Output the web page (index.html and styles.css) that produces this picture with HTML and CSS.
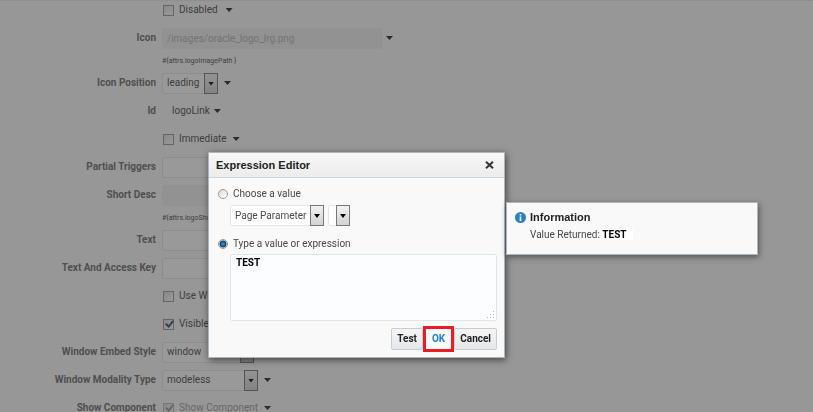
FILE: index.html
```html
<!DOCTYPE html>
<html lang="en">
<head>
    <meta charset="UTF-8">
    <title>Expression Editor</title>
    <link rel="stylesheet" href="styles.css">
</head>
<body>

<!-- component properties -->
<form class="props" action="#">
    <div class="row">
        <span class="name"></span>
        <input type="checkbox" class="check" id="disabled">
        <label for="disabled">Disabled</label>
        <button type="button" class="more after-text" aria-label="Disabled options"></button>
    </div>
    <div class="row">
        <label class="name" for="icon">Icon</label>
        <input type="text" class="field" id="icon" value="/images/oracle_logo_lrg.png" disabled>
        <button type="button" class="more after-field" aria-label="Icon options"></button>
    </div>
    <p class="hint">#{attrs.logoImagePath }</p>
    <div class="row">
        <label class="name" for="position">Icon Position</label>
        <span class="pick pick-s"><select id="position"><option>leading</option></select></span>
        <button type="button" class="more" aria-label="Icon position options"></button>
    </div>
    <div class="row">
        <span class="name">Id</span>
        <span class="value">logoLink</span>
        <button type="button" class="more after-field" aria-label="Id options"></button>
    </div>
    <div class="row">
        <span class="name"></span>
        <input type="checkbox" class="check" id="immediate">
        <label for="immediate">Immediate</label>
        <button type="button" class="more" aria-label="Immediate options"></button>
    </div>
    <div class="row">
        <label class="name" for="triggers">Partial Triggers</label>
        <input type="text" class="field" id="triggers">
    </div>
    <div class="row">
        <label class="name" for="desc">Short Desc</label>
        <input type="text" class="field" id="desc" disabled>
    </div>
    <p class="hint">#{attrs.logoShortDesc }</p>
    <div class="row">
        <label class="name" for="text">Text</label>
        <input type="text" class="field" id="text">
    </div>
    <div class="row">
        <label class="name" for="access">Text And Access Key</label>
        <input type="text" class="field" id="access">
    </div>
    <div class="row">
        <span class="name"></span>
        <input type="checkbox" class="check" id="usewindow">
        <label for="usewindow">Use Window</label>
    </div>
    <div class="row">
        <span class="name"></span>
        <input type="checkbox" class="check" id="visible" checked>
        <label for="visible">Visible</label>
    </div>
    <div class="row">
        <label class="name" for="embed">Window Embed Style</label>
        <span class="pick pick-m"><select id="embed"><option>window</option></select></span>
    </div>
    <div class="row">
        <label class="name" for="modality">Window Modality Type</label>
        <span class="pick pick-l"><select id="modality"><option>modeless</option></select></span>
        <button type="button" class="more" aria-label="Window modality options"></button>
    </div>
    <div class="row">
        <label class="name" for="show">Show Component</label>
        <input type="checkbox" class="check" id="show" checked disabled>
        <label class="off" for="show">Show Component</label>
        <button type="button" class="more" aria-label="Show component options"></button>
    </div>
</form>

<div class="shade"></div>

<!-- expression editor -->
<div class="dialog" role="dialog" aria-labelledby="dialog-title">
    <div class="dialog-head">
        <h1 id="dialog-title">Expression Editor</h1>
        <button type="button" class="close" aria-label="Close">
            <svg width="9" height="8" viewBox="0 0 9 8"><path d="M1 .8L8 7.2M8 .8L1 7.2" stroke="#333" stroke-width="2"/></svg>
        </button>
    </div>
    <form class="dialog-body" action="#">
        <div class="option">
            <input type="radio" class="radio" name="mode" id="choose">
            <label for="choose">Choose a value</label>
        </div>
        <div class="choices">
            <span class="pick pick-param"><select aria-label="Value type"><option>Page Parameter</option></select></span>
            <span class="pick pick-empty"><select aria-label="Value"><option></option></select></span>
        </div>
        <div class="option">
            <input type="radio" class="radio" name="mode" id="type" checked>
            <label for="type">Type a value or expression</label>
        </div>
        <div class="editor">
            <textarea aria-label="Expression" spellcheck="false">TEST</textarea>
            <svg class="grip" width="8" height="8" viewBox="0 0 8 8" fill="#b4b4b4">
                <path d="M6 0h1v1h-1zM3 3h1v1h-1zM6 3h1v1h-1zM0 6h1v1h-1zM3 6h1v1h-1zM6 6h1v1h-1z"/>
            </svg>
        </div>
        <div class="actions">
            <button type="button" class="btn">Test</button>
            <button type="button" class="btn btn-ok">OK</button>
            <button type="button" class="btn">Cancel</button>
        </div>
    </form>
</div>

<!-- result message -->
<div class="message" role="status">
    <svg class="info" width="11" height="11" viewBox="0 0 11 11">
        <circle cx="5.5" cy="5.5" r="5.5" fill="#2a80c0"/>
        <path d="M4.7 2h1.6v1.5h-1.6zM4.7 4.5h1.6v4.5h-1.6z" fill="#fff"/>
    </svg>
    <div>
        <h2>Information</h2>
        <p>Value Returned: <b>TEST</b></p>
    </div>
</div>

</body>
</html>
```
FILE: styles.css
```css
*, *::before, *::after{
    margin: 0;
    padding: 0;
    box-sizing: border-box;
}
body{
    height: 100vh;
    overflow: hidden;
    background: #fbfbfb;
    border-top: 1px solid #e4edf4;
    color: #484848;
    font-family: Roboto, "Liberation Sans", sans-serif;
    font-size: 10px;
    line-height: 12px;
}
input, select, textarea, button{
    font: inherit;
    color: inherit;
}

/* property form */
.props{
    margin-top: -5px;
}
.row{
    display: flex;
    align-items: center;
    height: 28px;
}
.name{
    width: 156px;
    margin-right: 6px;
    text-align: right;
    font-weight: bold;
    color: #6a6a6a;
}
.hint{
    height: 17px;
    padding-left: 162px;
    font-size: 7px;
    line-height: 19px;
}
.field{
    width: 220px;
    height: 21px;
    padding: 0 4px;
    border: 1px solid #e4e4e4;
    border-radius: 2px;
    background: #fff;
}
.field:disabled{
    background: #f0f0f0;
    border-color: #f0f0f0;
    color: #b0b0b0;
}
.value{
    padding-left: 10px;
}
.off{
    color: #999;
}
.more{
    width: 7px;
    height: 4px;
    margin-left: 6px;
    border: 0;
    background: #222;
    clip-path: polygon(0 0, 100% 0, 50% 100%);
}
.after-text{
    margin-left: 8px;
}
.after-field{
    margin-left: 4px;
}

/* tick boxes and radios */
.check, .radio{
    appearance: none;
    flex: none;
    width: 11px;
    height: 11px;
    border: 1px solid #999;
    background: linear-gradient(135deg, #ddd, #fff);
}
.check{
    margin: 0 5px 0 1px;
}
.check:checked::after{
    content: "";
    display: block;
    width: 5px;
    height: 8px;
    margin: -1px 0 0 3px;
    border: solid #334a80;
    border-width: 0 2px 2px 0;
    transform: rotate(40deg);
}
.check:disabled{
    border-color: #bbb;
}
.check:disabled::after{
    border-color: #999;
}
.radio{
    width: 10px;
    height: 10px;
    margin-right: 5px;
    border-radius: 50%;
}
.radio:checked{
    background: radial-gradient(circle, #36a3d8 0, #10406c 3px, #eee 4px);
}

/* drop-downs */
.pick{
    position: relative;
    height: 21px;
}
.pick select{
    appearance: none;
    width: 100%;
    height: 100%;
    padding: 0 14px 0 4px;
    border: 1px solid #e2e8ea;
    border-radius: 2px;
    background: #fff;
}
.pick::before, .pick::after{
    content: "";
    position: absolute;
    pointer-events: none;
}
.pick::before{
    top: 0;
    right: 0;
    width: 14px;
    height: 21px;
    border: 1px solid #777;
    background: linear-gradient(#f2f2f2, #d2d2d2);
}
.pick::after{
    top: 9px;
    right: 4px;
    width: 6px;
    height: 4px;
    background: #000;
    clip-path: polygon(0 0, 100% 0, 50% 100%);
}
.pick-s{
    width: 56px;
}
.pick-m{
    width: 92px;
}
.pick-l{
    width: 96px;
}
.pick-param{
    width: 94px;
}
.pick-empty{
    width: 22px;
}

.shade{
    position: fixed;
    inset: 0;
    background: rgba(51, 51, 51, 0.5);
}

/* dialog window */
.dialog{
    position: absolute;
    left: 208px;
    top: 152px;
    width: 297px;
    border: 1px solid #a9b7c4;
    background: #f9f9f9;
    box-shadow: 1px 2px 7px rgba(0, 0, 0, 0.55);
}
.dialog-head{
    display: flex;
    align-items: center;
    justify-content: space-between;
    height: 25px;
    padding: 0 10px 0 7px;
    border-bottom: 1px solid #c9d5df;
    background: linear-gradient(#f8f8f8, #ececec);
}
h1, h2{
    font-family: "Liberation Sans", Arial, sans-serif;
    font-size: 11px;
    line-height: 13px;
    color: #222;
}
.close{
    display: flex;
    border: 0;
    background: none;
}
.dialog-body{
    padding: 10px 7px 7px 9px;
}
.option{
    display: flex;
    align-items: center;
    height: 12px;
}
.choices{
    display: flex;
    gap: 4px;
    padding: 5px 0 12px 12px;
}
.editor{
    position: relative;
    margin: 4px 0 7px 12px;
}
.editor textarea{
    display: block;
    width: 100%;
    height: 67px;
    padding: 2px 5px;
    border: 1px solid #dfe6e8;
    border-radius: 2px;
    background: #fcfdfe;
    color: #000;
    font-weight: bold;
    resize: none;
}
.grip{
    position: absolute;
    right: 2px;
    bottom: 2px;
}
.actions{
    display: flex;
    align-items: center;
    justify-content: flex-end;
    height: 22px;
}
.btn{
    height: 22px;
    padding: 0 5px;
    border: 1px solid #c4ced7;
    border-radius: 2px;
    background: linear-gradient(#f4f5f6, #e4e7ea);
    color: #222;
    font-weight: bold;
}
.btn-ok{
    height: 26px;
    padding: 0 6px;
    border: 3px solid #ed1c24;
    border-radius: 0;
    background: #f7f9fa;
    color: #2482cc;
}

/* message window */
.message{
    position: absolute;
    left: 506px;
    top: 202px;
    display: flex;
    gap: 4px;
    width: 252px;
    min-height: 53px;
    padding: 8px;
    border: 1px solid #a9b7c4;
    background: #f9f9f9;
    box-shadow: 1px 2px 6px rgba(0, 0, 0, 0.45);
}
.info{
    margin-top: 1px;
}
.message p{
    margin-top: 5px;
}
.message b{
    padding-right: 6px;
    background: #fff;
    color: #000;
}
```
